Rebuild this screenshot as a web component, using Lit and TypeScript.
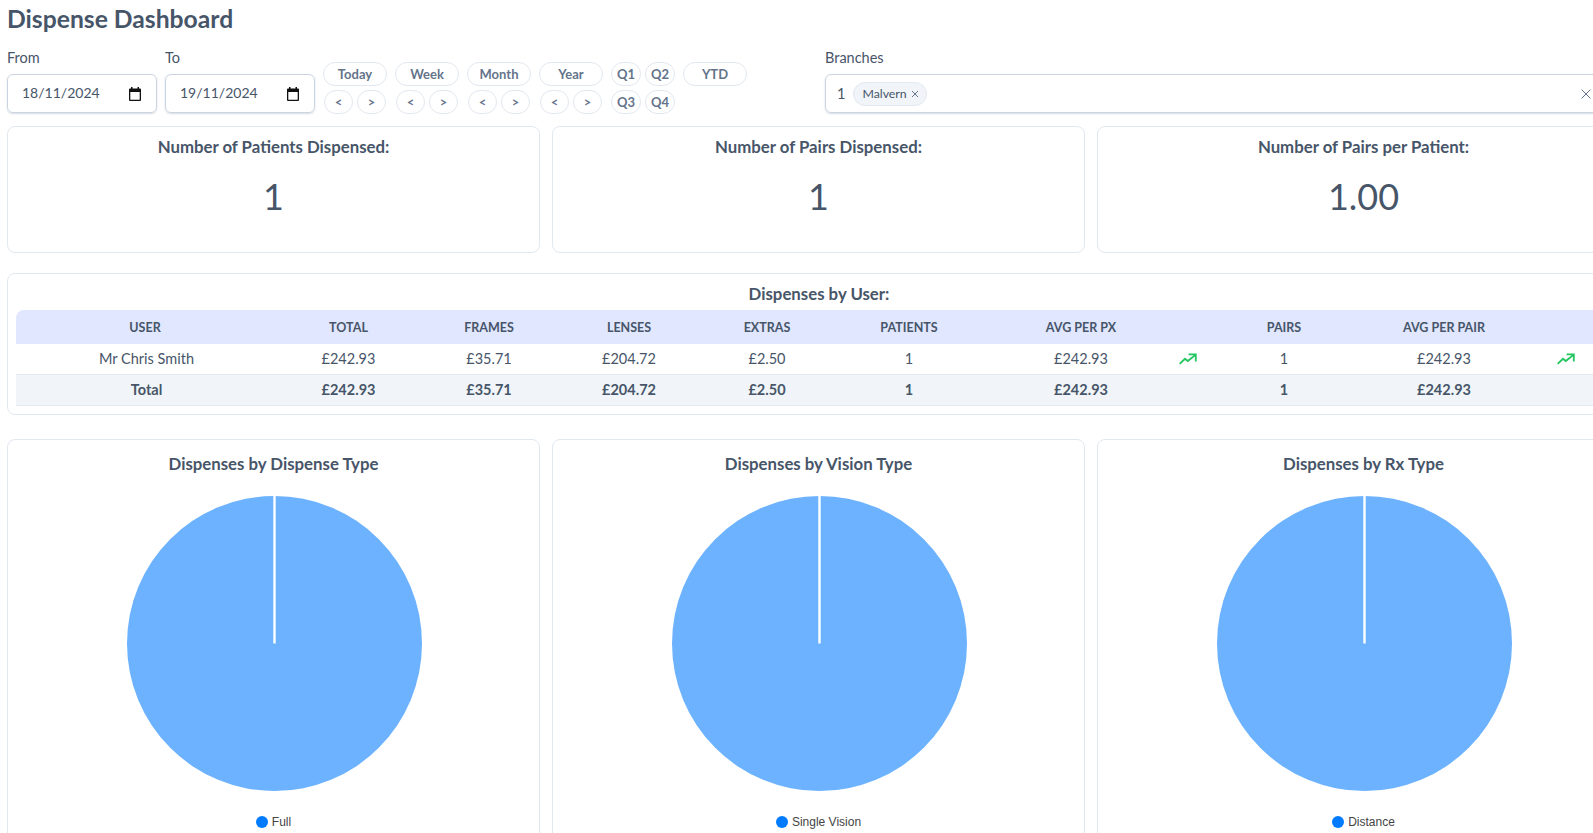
import { LitElement, html, css } from "lit";
import { customElement } from "lit/decorators.js";

const calendar = html`<svg class="cal" viewBox="0 0 12 14" width="12" height="14"><path fill="#111" fill-rule="evenodd" d="M2 0h1.5v1.4h5V0H10v1.4h1A1 1 0 0 1 12 2.4V13a1 1 0 0 1-1 1H1a1 1 0 0 1-1-1V2.4a1 1 0 0 1 1-1h1zM1.3 5v7.7h9.4V5z"/></svg>`;
const trend = html`<svg class="trend" viewBox="0 0 18 12" width="18" height="12"><path fill="none" stroke="#22c55e" stroke-width="1.8" d="M.7 10.8 6 5.8l2.8 2.2 8-6.4M9.6 1.4h7.2v7.2"/></svg>`;

const columns = [258, 149, 132, 148, 128, 156, 188, 26, 166, 154, 101];
const rows = ["Mr Chris Smith", "£242.93", "£35.71", "£204.72", "£2.50", "1", "£242.93", "T", "1", "£242.93", "T"];
const total = ["Total", "£242.93", "£35.71", "£204.72", "£2.50", "1", "£242.93", "", "1", "£242.93", ""];
const heads = ["User", "Total", "Frames", "Lenses", "Extras", "Patients", "Avg per PX", "", "Pairs", "Avg per pair", ""];

@customElement("app-root")
export class AppRoot extends LitElement {
  static styles = css`
    :host { display: block; width: 1593px; height: 833px; overflow: hidden; background: #fff; color: #475569; font-family: "Lato", "Noto Sans", sans-serif; font-size: 14.5px; }
    * { box-sizing: border-box; }
    .page { width: 1638px; padding: 0 7px; }
    h1 { margin: 0; font-size: 24.7px; line-height: 38px; font-weight: 700; color: #475569; }
    .filters { display: flex; height: 88px; padding-top: 11px; }
    .field { width: 150px; margin-right: 8px; }
    .field label, .branches label { display: block; line-height: 17px; height: 25px; font-size: 14.5px; }
    .date { height: 39px; display: flex; align-items: center; justify-content: space-between; padding: 0 15px 2px 14px; border: 1px solid #cbd5e1; border-radius: 6px; box-shadow: 0 1px 2px rgba(100,116,139,.25); font-size: 14px; }
    .cal { display: block; margin-top: 2px; }
    .quick { display: flex; gap: 8px; padding-top: 13px; width: 502px; }
    .group { display: flex; flex-direction: column; gap: 4px; align-items: center; }
    .line { display: flex; gap: 4px; }
    .pill { height: 24px; border: 1px solid #e2e8f0; border-radius: 12px; background: #fff; display: flex; align-items: center; justify-content: center; font-size: 13px; font-weight: 700; color: #64748b; }
    .wide { width: 64px; }
    .arrow { width: 29px; }
    .q { width: 30px; }
    .branches { flex: 1; }
    .select { height: 39px; display: flex; align-items: center; gap: 8px; padding: 0 11px; border: 1px solid #cbd5e1; border-radius: 6px; box-shadow: 0 1px 2px rgba(100,116,139,.25); position: relative; }
    .chip { height: 24px; padding: 0 7px 0 8px; display: flex; align-items: center; gap: 4px; background: #f1f5f9; border: 1px solid #e2e8f0; border-radius: 12px; font-size: 12.3px; }
    .chip svg { display: block; }
    .clear { position: absolute; left: 755px; top: 14px; }
    .cards { display: grid; grid-template-columns: repeat(3, 533px); gap: 12px; }
    .card { border: 1px solid #e2e8f0; border-radius: 8px; background: #fff; }
    .metric { height: 127px; text-align: center; }
    .metric h3 { margin: 0; padding-top: 9px; font-size: 16.8px; line-height: 21px; font-weight: 700; }
    .metric div { font-size: 36px; line-height: 50px; margin-top: 14px; }
    .tablecard { height: 142px; margin-top: 20px; padding: 0 8px; }
    .tablecard h3 { margin: 0; height: 36px; padding-top: 9px; text-align: center; font-size: 16.8px; line-height: 21px; font-weight: 700; }
    table { border-collapse: collapse; table-layout: fixed; width: 1606px; text-align: center; }
    th { height: 34px; padding: 0; background: #e0e7ff; font-size: 12.5px; font-weight: 700; text-transform: uppercase; }
    th:first-child { border-top-left-radius: 8px; }
    td { height: 30.5px; padding: 0 0 2px; border-bottom: 1px solid #e2e8f0; font-size: 14.5px; }
    td:first-child { padding-left: 3px; }
    td:last-child { padding-right: 12px; }
    .sum td { background: #f1f5f9; font-weight: 700; padding-bottom: 1px; }
    .trend { display: block; margin: 2px auto 0; }
    .charts { margin-top: 24px; }
    .chart { height: 500px; display: flex; flex-direction: column; align-items: center; }
    .chart h3 { margin: 0; padding-top: 13px; font-size: 16.8px; line-height: 22px; font-weight: 700; }
    .pie { display: block; margin: 21px 0 0 2px; }
    .legend { display: flex; align-items: center; gap: 4px; margin-top: 24px; font-family: "Liberation Sans", Arial, sans-serif; font-size: 12px; color: #444; }
    .dot { width: 12px; height: 12px; border-radius: 50%; background: #007bff; }
  `;

  private wideGroup(label: string) {
    return html`<div class="group"><div class="pill wide">${label}</div><div class="line"><div class="pill arrow">&lt;</div><div class="pill arrow">&gt;</div></div></div>`;
  }

  private pie() {
    return html`<svg class="pie" width="295" height="295" viewBox="0 0 295 295"><circle cx="147.5" cy="147.5" r="147.5" fill="#6cb2ff"/><path d="M147.5 0v147.5" stroke="#fff" stroke-width="2.4"/></svg>`;
  }

  private chart(title: string, legend: string) {
    return html`<div class="card chart"><h3>${title}</h3>${this.pie()}<div class="legend"><span class="dot"></span>${legend}</div></div>`;
  }

  render() {
    return html`<div class="page">
      <h1>Dispense Dashboard</h1>
      <div class="filters">
        <div class="field"><label>From</label><div class="date">18/11/2024${calendar}</div></div>
        <div class="field"><label>To</label><div class="date">19/11/2024${calendar}</div></div>
        <div class="quick">
          ${this.wideGroup("Today")}${this.wideGroup("Week")}${this.wideGroup("Month")}${this.wideGroup("Year")}
          <div class="group">
            <div class="line"><div class="pill q">Q1</div><div class="pill q">Q2</div></div>
            <div class="line"><div class="pill q">Q3</div><div class="pill q">Q4</div></div>
          </div>
          <div class="group"><div class="pill wide">YTD</div></div>
        </div>
        <div class="branches"><label>Branches</label>
          <div class="select">1
            <div class="chip">Malvern <svg width="8" height="8" viewBox="0 0 8 8"><path d="M1 1l6 6M7 1 1 7" stroke="#64748b" fill="none"/></svg></div>
            <svg class="clear" width="10" height="10" viewBox="0 0 10 10"><path d="M.5.5l9 9M9.5.5l-9 9" stroke="#64748b" fill="none"/></svg>
          </div>
        </div>
      </div>
      <div class="cards">
        <div class="card metric"><h3>Number of Patients Dispensed:</h3><div>1</div></div>
        <div class="card metric"><h3>Number of Pairs Dispensed:</h3><div>1</div></div>
        <div class="card metric"><h3>Number of Pairs per Patient:</h3><div>1.00</div></div>
      </div>
      <div class="card tablecard">
        <h3>Dispenses by User:</h3>
        <table>
          <colgroup>${columns.map((w) => html`<col style="width:${w}px" />`)}</colgroup>
          <thead><tr>${heads.map((h) => html`<th>${h}</th>`)}</tr></thead>
          <tbody>
            <tr>${rows.map((c) => html`<td>${c === "T" ? trend : c}</td>`)}</tr>
            <tr class="sum">${total.map((c) => html`<td>${c}</td>`)}</tr>
          </tbody>
        </table>
      </div>
      <div class="cards charts">
        ${this.chart("Dispenses by Dispense Type", "Full")}
        ${this.chart("Dispenses by Vision Type", "Single Vision")}
        ${this.chart("Dispenses by Rx Type", "Distance")}
      </div>
    </div>`;
  }
}
